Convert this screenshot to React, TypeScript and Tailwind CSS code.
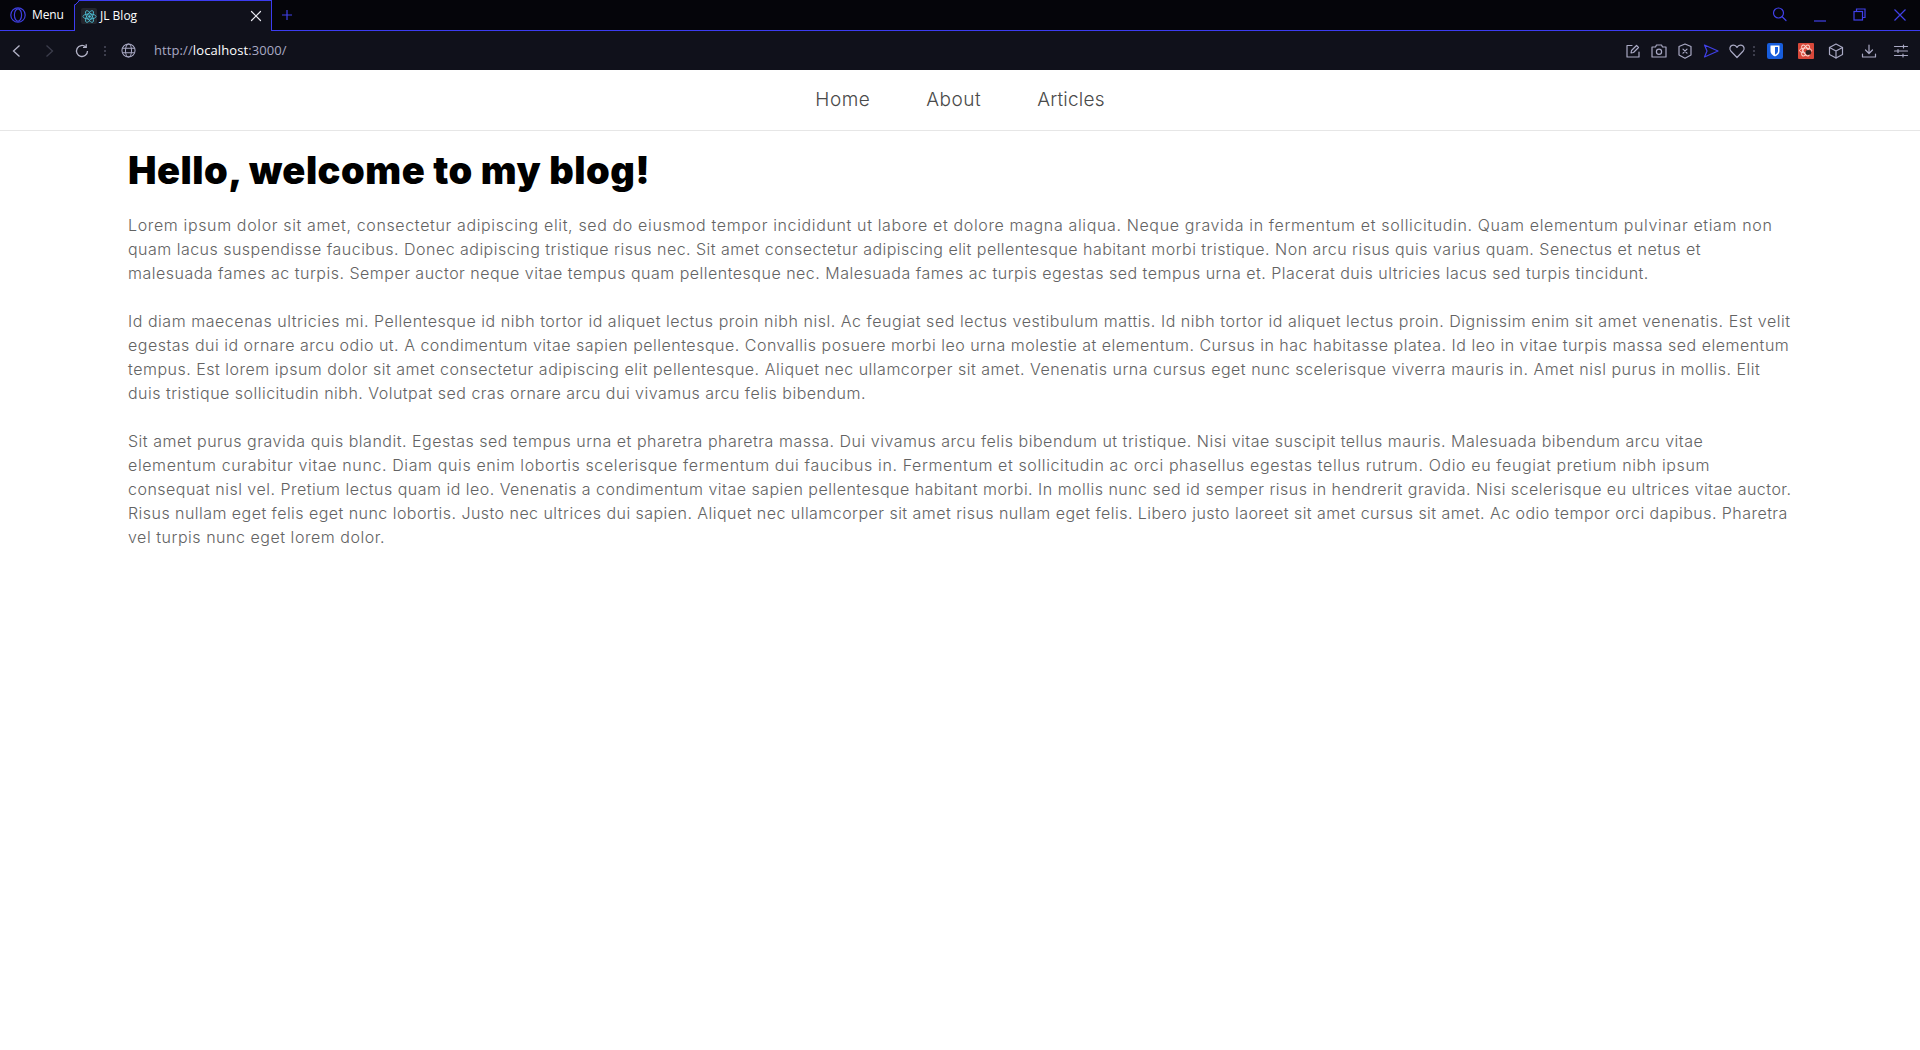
import React from "react";

type L = [string, string];

const P1: L[] = [
  ["Lorem ipsum dolor sit amet, consectetur adipiscing elit, sed do eiusmod tempor incididunt ut labore et dolore magna aliqua. Neque gravida in fermentum et sollicitudin. Quam elementum pulvinar etiam non", "tracking-[0.636px]"],
  ["quam lacus suspendisse faucibus. Donec adipiscing tristique risus nec. Sit amet consectetur adipiscing elit pellentesque habitant morbi tristique. Non arcu risus quis varius quam. Senectus et netus et", "tracking-[0.476px]"],
  ["malesuada fames ac turpis. Semper auctor neque vitae tempus quam pellentesque nec. Malesuada fames ac turpis egestas sed tempus urna et. Placerat duis ultricies lacus sed turpis tincidunt.", "tracking-[0.491px]"],
];
const P2: L[] = [
  ["Id diam maecenas ultricies mi. Pellentesque id nibh tortor id aliquet lectus proin nibh nisl. Ac feugiat sed lectus vestibulum mattis. Id nibh tortor id aliquet lectus proin. Dignissim enim sit amet venenatis. Est velit", "tracking-[0.534px]"],
  ["egestas dui id ornare arcu odio ut. A condimentum vitae sapien pellentesque. Convallis posuere morbi leo urna molestie at elementum. Cursus in hac habitasse platea. Id leo in vitae turpis massa sed elementum", "tracking-[0.502px]"],
  ["tempus. Est lorem ipsum dolor sit amet consectetur adipiscing elit pellentesque. Aliquet nec ullamcorper sit amet. Venenatis urna cursus eget nunc scelerisque viverra mauris in. Amet nisl purus in mollis. Elit", "tracking-[0.506px]"],
  ["duis tristique sollicitudin nibh. Volutpat sed cras ornare arcu dui vivamus arcu felis bibendum.", "tracking-[0.482px]"],
];
const P3: L[] = [
  ["Sit amet purus gravida quis blandit. Egestas sed tempus urna et pharetra pharetra massa. Dui vivamus arcu felis bibendum ut tristique. Nisi vitae suscipit tellus mauris. Malesuada bibendum arcu vitae", "tracking-[0.511px]"],
  ["elementum curabitur vitae nunc. Diam quis enim lobortis scelerisque fermentum dui faucibus in. Fermentum et sollicitudin ac orci phasellus egestas tellus rutrum. Odio eu feugiat pretium nibh ipsum", "tracking-[0.614px]"],
  ["consequat nisl vel. Pretium lectus quam id leo. Venenatis a condimentum vitae sapien pellentesque habitant morbi. In mollis nunc sed id semper risus in hendrerit gravida. Nisi scelerisque eu ultrices vitae auctor.", "tracking-[0.482px]"],
  ["Risus nullam eget felis eget nunc lobortis. Justo nec ultrices dui sapien. Aliquet nec ullamcorper sit amet risus nullam eget felis. Libero justo laoreet sit amet cursus sit amet. Ac odio tempor orci dapibus. Pharetra", "tracking-[0.458px]"],
  ["vel turpis nunc eget lorem dolor.", "tracking-[0.53px]"],
];

const gray = "#a9a9c4";
const blue = "#4040e8";

function Ic({ c = gray, children }: { c?: string; children: React.ReactNode }) {
  return (
    <svg width={18} height={18} viewBox="0 0 18 18" fill="none" stroke={c} strokeWidth="1.2" strokeLinecap="round" strokeLinejoin="round">
      {children}
    </svg>
  );
}

function Dots() {
  return (
    <span className="flex h-[10px] w-[2px] flex-col justify-between">
      <i className="block h-[2px] w-[2px] bg-[#3c3d4c]" />
      <i className="block h-[2px] w-[2px] bg-[#3c3d4c]" />
      <i className="block h-[2px] w-[2px] bg-[#3c3d4c]" />
    </span>
  );
}

function Para({ lines }: { lines: L[] }) {
  return (
    <p className="mb-6 whitespace-nowrap text-[16px] leading-6 font-light text-[#636363]">
      {lines.map(([t, c], i) => (
        <span key={i} className={"block " + c}>{t}</span>
      ))}
    </p>
  );
}

export default function App() {
  return (
    <div className="min-h-[1050px] bg-white font-['Inter',sans-serif]">
      {/* Tab strip */}
      <div className="flex h-[31px] bg-[#05050a] font-['Open_Sans',sans-serif] text-[12px] text-white">
        <div className="flex h-full w-[74px] items-center gap-[6px] border-b border-[#3c3cf0] pl-[10px] pb-[1px]">
          <svg width="16" height="16" viewBox="0 0 16 16" fill="none" stroke="#3f3fe0" strokeWidth="1.2">
            <circle cx="8" cy="8" r="7.2" />
            <ellipse cx="8" cy="8" rx="3.6" ry="6.2" />
          </svg>
          <span className="font-medium tracking-[-0.1px]">Menu</span>
        </div>
        <div className="relative flex h-full w-[198px] items-center border-x border-t border-[#3c3cf0] bg-[#10111b] pl-[6px] pr-[8px] [clip-path:polygon(5px_0,100%_0,100%_100%,0_100%,0_5px)]">
          <svg className="absolute left-[-1px] top-[-1px]" width="6" height="6" viewBox="0 0 6 6">
            <path d="M0.5 5.5 L5.5 0.5" stroke="#3c3cf0" strokeWidth="1" />
          </svg>
          <span className="mr-[3px] flex h-[16px] w-[16px] items-center justify-center rounded-[2px] bg-[#23262e]">
            <svg width="15" height="15" viewBox="0 0 16 16" fill="none" stroke="#4fc3d9" strokeWidth="0.9">
              <circle cx="8" cy="8" r="1.4" fill="#4fc3d9" stroke="none" />
              <ellipse cx="8" cy="8" rx="7" ry="2.8" />
              <ellipse cx="8" cy="8" rx="7" ry="2.8" transform="rotate(60 8 8)" />
              <ellipse cx="8" cy="8" rx="7" ry="2.8" transform="rotate(120 8 8)" />
            </svg>
          </span>
          <span className="font-medium">JL Blog</span>
          <svg className="ml-auto mr-[1px]" width="12" height="12" viewBox="0 0 12 12" stroke="#e8e8f0" strokeWidth="1.2" strokeLinecap="round">
            <path d="M1.5 1.5 L10.5 10.5 M10.5 1.5 L1.5 10.5" />
          </svg>
        </div>
        <div className="flex h-full flex-1 items-center border-b border-[#3c3cf0] pb-[1px]">
          <svg className="ml-[8px]" width="14" height="14" viewBox="0 0 14 14" stroke={blue} strokeWidth="1.2">
            <path d="M7 2 V12 M2 7 H12" />
          </svg>
          <div className="ml-auto flex items-center pr-[13px]">
            <Ic c={blue}>
              <circle cx="7.5" cy="7" r="5" />
              <path d="M11.2 10.8 L15 14.5" />
            </Ic>
            <svg className="ml-[24px] mt-[2px]" width="14" height="14" viewBox="0 0 14 14" stroke={blue} strokeWidth="1.2">
              <path d="M1 12 H13" />
            </svg>
            <svg className="ml-[26px]" width="13" height="13" viewBox="0 0 13 13" fill="none" stroke={blue} strokeWidth="1.2">
              <rect x="1" y="3.5" width="8.5" height="8.5" />
              <path d="M3.5 3.5 V1 H12 V9.5 H9.5" />
            </svg>
            <svg className="ml-[27px]" width="14" height="14" viewBox="0 0 14 14" stroke={blue} strokeWidth="1.2">
              <path d="M1.5 1.5 L12.5 12.5 M12.5 1.5 L1.5 12.5" />
            </svg>
          </div>
        </div>
      </div>

      {/* Address bar */}
      <div className="flex h-[39px] items-center bg-[#10111b] font-['Open_Sans',sans-serif] text-[13px] tracking-[0.1px] text-[#a9a9c4]">
        <svg className="ml-[10px]" width="14" height="14" viewBox="0 0 14 14" fill="none" stroke="#b4b4c8" strokeWidth="1.3">
          <path d="M9.5 1.5 L3.5 7 L9.5 12.5" />
        </svg>
        <svg className="ml-[18px]" width="14" height="14" viewBox="0 0 14 14" fill="none" stroke="#3c3d4c" strokeWidth="1.3">
          <path d="M4.5 1.5 L10.5 7 L4.5 12.5" />
        </svg>
        <svg className="ml-[18px]" width="16" height="16" viewBox="0 0 16 16" fill="none" stroke="#b4b4c8" strokeWidth="1.3">
          <path d="M13.5 8 A5.5 5.5 0 1 1 11.7 3.9" />
          <path d="M12.2 1.2 V4.4 H9" />
        </svg>
        <span className="ml-[14px]"><Dots /></span>
        <svg className="ml-[15px]" width="15" height="15" viewBox="0 0 16 16" fill="none" stroke="#a9a9c4" strokeWidth="1.1">
          <circle cx="8" cy="8" r="7" />
          <ellipse cx="8" cy="8" rx="3.2" ry="7" />
          <path d="M1.5 5.5 H14.5 M1.5 10.5 H14.5" />
        </svg>
        <span className="ml-[18px]">
          http://<span className="text-white">localhost</span>:3000/
        </span>

        <div className="ml-auto flex items-center pr-[10px]">
          <Ic>
            <path d="M8 3.5 H3 V15 H15 V10" />
            <path d="M7 11 L7.5 8.5 L12.5 3.5 L14.5 5.5 L9.5 10.5 Z" />
          </Ic>
          <span className="ml-[8px]">
            <Ic>
              <path d="M2 5 H5.5 L6.5 3 H11.5 L12.5 5 H16 V15 H2 Z" />
              <circle cx="9" cy="9.8" r="2.6" />
            </Ic>
          </span>
          <span className="ml-[8px]">
            <Ic>
              <path d="M9 2 L15 4.5 V13 L9 16.2 L3 13 V4.5 Z" />
              <path d="M7 7.2 L11 11.2 M11 7.2 L7 11.2" />
            </Ic>
          </span>
          <span className="ml-[8px]">
            <Ic c={blue}>
              <path d="M2.5 3 L16 9 L2.5 15 L5 9 Z" />
            </Ic>
          </span>
          <span className="ml-[8px]">
            <Ic>
              <path d="M9 15.5 L2.8 9 C1.2 7 1.8 4.2 4 3.4 C6 2.7 8 3.6 9 5.4 C10 3.6 12 2.7 14 3.4 C16.2 4.2 16.8 7 15.2 9 Z" />
            </Ic>
          </span>
          <span className="ml-[7px]"><Dots /></span>
          <span className="ml-[12px] flex h-[16px] w-[16px] items-center justify-center rounded-[2px] bg-[#175ddc]">
            <svg width="10" height="12" viewBox="0 0 10 12">
              <path d="M0.5 0.5 H9.5 V6 C9.5 9 7 10.5 5 11.5 C3 10.5 0.5 9 0.5 6 Z M5 2 V9.8 C6.5 9 8 7.8 8 6 V2 Z" fill="#fff" fillRule="evenodd" />
            </svg>
          </span>
          <span className="ml-[15px] flex h-[16px] w-[16px] items-center justify-center rounded-[1px] bg-[#d8483a]">
            <svg width="15" height="15" viewBox="0 0 16 16" fill="none" stroke="#ffd9d2" strokeWidth="1">
              <ellipse cx="7" cy="8" rx="6.5" ry="2.6" />
              <ellipse cx="7" cy="8" rx="6.5" ry="2.6" transform="rotate(60 7 8)" />
              <ellipse cx="7" cy="8" rx="6.5" ry="2.6" transform="rotate(120 7 8)" />
              <ellipse cx="10" cy="10" rx="3" ry="2.6" fill="#2b2020" stroke="none" />
            </svg>
          </span>
          <span className="ml-[13px]">
            <Ic>
              <path d="M9 2 L15.5 5.5 V12.5 L9 16 L2.5 12.5 V5.5 Z" />
              <path d="M2.5 5.5 L9 9 L15.5 5.5 M9 9 V16" />
            </Ic>
          </span>
          <span className="ml-[15px]">
            <Ic>
              <path d="M9 3 V11 M5.5 8 L9 11.5 L12.5 8" />
              <path d="M2.5 12 V15 H15.5 V12" />
            </Ic>
          </span>
          <span className="ml-[14px]">
            <Ic>
              <path d="M2.5 4.5 H15.5 M2.5 9 H15.5 M2.5 13.5 H15.5" />
              <path d="M11.5 3 V6 M6 7.5 V10.5 M11 12 V15" />
            </Ic>
          </span>
        </div>
      </div>

      {/* Site nav */}
      <nav className="flex h-[61px] items-center justify-center gap-[56px] border-b border-[#e6e6e6] text-[19px] font-light text-[#4a4a4a]">
        <a className="tracking-[0.5px]">Home</a>
        <a className="tracking-[0.5px]">About</a>
        <a className="tracking-[0.2px]">Articles</a>
      </nav>

      {/* Article */}
      <main className="px-[128px]">
        <h1 className="mt-[15px] mb-[19px] whitespace-nowrap text-[38px] leading-[48px] font-black tracking-[0.5px] text-black">
          Hello, welcome to my blog!
        </h1>
        <Para lines={P1} />
        <Para lines={P2} />
        <Para lines={P3} />
      </main>
    </div>
  );
}
